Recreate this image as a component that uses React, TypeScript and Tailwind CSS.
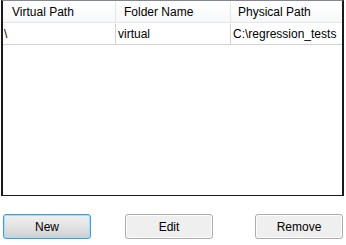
export default function App() {
  const cols = ["Virtual Path", "Folder Name", "Physical Path"];
  const row = ["\\", "virtual", "C:\\regression_tests"];

  return (
    <div className="w-[346px] h-[245px] bg-white overflow-hidden font-['Liberation_Sans',Arial,sans-serif] text-[12px] text-black">
      <div className="ml-[1px] w-[343px] h-[196px] border-x-2 border-b border-[#1a1a1a] border-t border-t-[#828790] bg-white">
        <div className="flex h-[22px] border-b border-[#e5e5e5] bg-gradient-to-b from-white to-[#f7f8f9]">
          <div className="w-[113px] pl-[9px] flex items-center border-r border-[#e5e5e5]">{cols[0]}</div>
          <div className="w-[115px] pl-[8px] flex items-center border-r border-[#e5e5e5]">{cols[1]}</div>
          <div className="flex-1 pl-[7px] flex items-center">{cols[2]}</div>
        </div>
        <div className="flex h-[21px] border-b border-[#d2d2d2] mt-[1px]">
          <div className="w-[113px] pl-[1px] flex items-center border-r border-[#d2d2d2]">{row[0]}</div>
          <div className="w-[115px] pl-[2px] flex items-center border-r border-[#d2d2d2]">{row[1]}</div>
          <div className="flex-1 pl-[2px] flex items-center">{row[2]}</div>
        </div>
      </div>
      <div className="flex mt-[18px] pl-[3px]">
        <button className="w-[88px] h-[25px] rounded-[3px] border border-[#3c9ee0] bg-gradient-to-b from-[#f0f0f0] via-[#e3e3e3] to-[#cfcfcf] shadow-[inset_0_0_0_1px_#a8dcf8]">
          New
        </button>
        <button className="ml-[34px] w-[88px] h-[25px] rounded-[3px] border border-[#adadad] bg-[#efefef] shadow-[inset_0_0_0_1px_#fcfcfc]">
          Edit
        </button>
        <button className="ml-[42px] w-[88px] h-[25px] rounded-[3px] border border-[#adadad] bg-[#efefef] shadow-[inset_0_0_0_1px_#fcfcfc]">
          Remove
        </button>
      </div>
    </div>
  );
}
